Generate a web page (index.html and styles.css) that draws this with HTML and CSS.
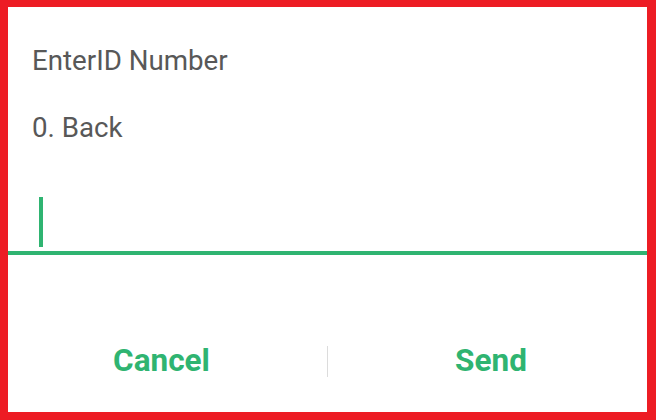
FILE: index.html
```html
<!DOCTYPE html>
<html lang="en">
<head>
<meta charset="utf-8">
<title>Dialog</title>
<link rel="stylesheet" href="styles.css">
</head>
<body>
<div class="frame">
  <div class="dialog">
    <div class="message">
      <p class="line">EnterID Number</p>
      <p class="line">0. Back</p>
    </div>
    <div class="input">
      <span class="cursor"></span>
    </div>
    <div class="actions">
      <button class="btn btn-cancel">Cancel</button>
      <span class="divider"></span>
      <button class="btn btn-send">Send</button>
    </div>
  </div>
</div>
</body>
</html>
```
FILE: styles.css
```css
html, body {
  margin: 0;
  padding: 0;
  background: #ed1c24;
}
.frame {
  width: 656px;
  height: 420px;
  box-sizing: border-box;
  border-style: solid;
  border-color: #ed1c24;
  border-width: 7px 9px 8px 8px;
  background: #ffffff;
}
.dialog {
  display: flex;
  flex-direction: column;
  height: 100%;
  font-family: Roboto, "Liberation Sans", sans-serif;
}
.message {
  padding: 34px 0 0 24px;
  display: flex;
  flex-direction: column;
  gap: 27px;
}
.line {
  margin: 0;
  font-size: 27.7px;
  line-height: 40px;
  color: #585858;
}
.input {
  margin-top: 49px;
  height: 58px;
  border-bottom: 4px solid #2fb471;
  padding-left: 31px;
  box-sizing: border-box;
}
.cursor {
  display: block;
  width: 4px;
  height: 50px;
  background: #2fb471;
}
.actions {
  margin-top: 76px;
  height: 60px;
  display: flex;
  align-items: center;
}
.btn {
  box-sizing: border-box;
  height: 60px;
  border: none;
  background: transparent;
  font-family: Roboto, "Liberation Sans", sans-serif;
  font-weight: 700;
  font-size: 31.5px;
  line-height: 60px;
  color: #2fb471;
  padding: 0;
  cursor: pointer;
}
.btn-cancel {
  flex: 0 0 319px;
  padding-right: 12px;
}
.btn-send {
  flex: 1 1 auto;
  padding-left: 7px;
}
.divider {
  flex: 0 0 1px;
  height: 31px;
  background: #dcdcdc;
}
```
